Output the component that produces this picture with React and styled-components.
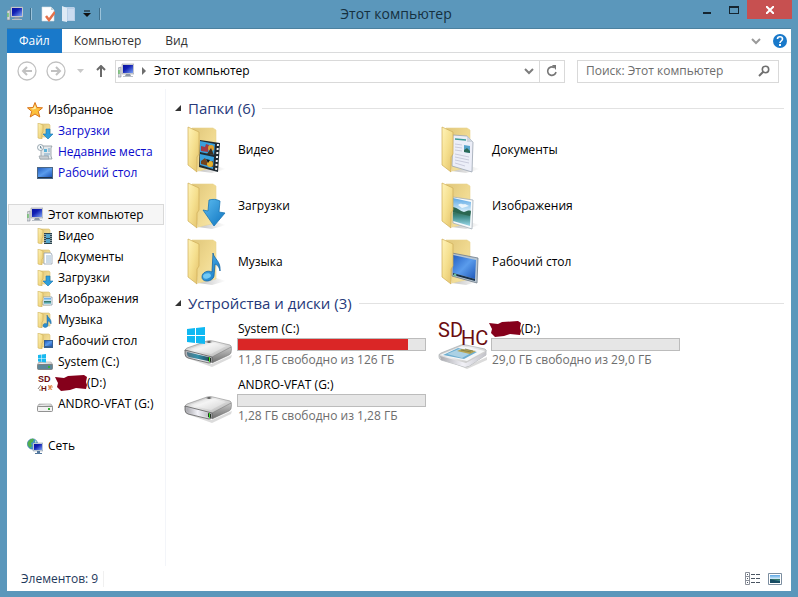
import styled, { createGlobalStyle } from 'styled-components';

const GlobalStyle = createGlobalStyle`
    * {
        box-sizing: border-box;
    }

    body {
        margin: 0;
        background: #5b97bb;
        color: #000;
        font-family: "Open Sans", "Noto Sans", sans-serif;
        font-size: 12px;
        line-height: 16px;
    }

    button, input {
        font: inherit;
        color: inherit;
        border: none;
        background: none;
        padding: 0;
        margin: 0;
    }

    a {
        color: inherit;
        text-decoration: none;
    }

    svg {
        display: block;
        flex: none;
    }
`;

const Window = styled.div`
    display: flex;
    flex-direction: column;
    min-height: 100vh;
    padding: 0 7px 6px;
`;

const TitleBar = styled.header`
    display: grid;
    grid-template-columns: 1fr auto 1fr;
    height: 28px;
    margin: 0 -1px 0 -7px;
`;

const QuickAccess = styled.div`
    display: flex;
    align-items: center;
    gap: 6px;
    padding-left: 7px;
`;

const QuickButton = styled.button`
    display: flex;
`;

const Divider = styled.span`
    width: 2px;
    height: 12px;
    margin: 0 3px 0 1px;
    border-left: 1px solid #3f6f8c;
    border-right: 1px solid #9cc3da;
`;

const Title = styled.h1`
    margin: 0;
    font-size: 14px;
    font-weight: 400;
    line-height: 27px;
    color: #15303f;
`;

const WindowButtons = styled.div`
    display: flex;
    justify-content: flex-end;
    align-items: flex-start;
`;

const WindowButton = styled.button`
    display: flex;
    align-items: center;
    justify-content: center;
    width: ${(p) => (p.$close ? '45px' : '27px')};
    height: 19px;
    background: ${(p) => (p.$close ? '#c75050' : 'transparent')};
`;

const Frame = styled.div`
    display: flex;
    flex: 1;
    flex-direction: column;
    background: #fff;
    border-top: 1px solid #4c819f;
`;

const Ribbon = styled.nav`
    display: flex;
    align-items: center;
    height: 24px;
    padding-right: 4px;
    border-bottom: 1px solid #dadbdc;
`;

const Tab = styled.button`
    height: 24px;
    padding: 0 12px;
    color: ${(p) => (p.$active ? '#fff' : '#333')};
    background: ${(p) => (p.$active ? '#1979ca' : 'transparent')};
`;

const RibbonTools = styled.div`
    display: flex;
    align-items: center;
    gap: 12px;
    margin-left: auto;
`;

const NavBar = styled.div`
    display: flex;
    align-items: center;
    height: 36px;
    padding: 0 12px 0 10px;
`;

const NavButtons = styled.div`
    display: flex;
    align-items: center;
    gap: 9px;
    margin-right: 9px;
`;

const AddressBar = styled.div`
    display: flex;
    flex: 1;
    align-items: center;
    height: 23px;
    margin-right: 12px;
    padding-left: 2px;
    border: 1px solid #d9d9d9;
`;

const Crumb = styled.button`
    display: flex;
    align-items: center;
    gap: 7px;
`;

const AddressButton = styled.button`
    display: flex;
    align-items: center;
    justify-content: center;
    width: ${(p) => (p.$wide ? '25px' : '20px')};
    height: 21px;
    margin-left: ${(p) => (p.$wide ? '0' : 'auto')};
    border-left: ${(p) => (p.$wide ? '1px solid #d9d9d9' : 'none')};
`;

const Search = styled.label`
    display: flex;
    flex: 0 0 202px;
    align-items: center;
    height: 23px;
    padding: 0 8px;
    border: 1px solid #d9d9d9;
`;

const SearchInput = styled.input`
    flex: 1;
    min-width: 0;
    outline: none;

    &::placeholder {
        color: #6d6d6d;
        opacity: 1;
    }
`;

const Body = styled.div`
    display: flex;
    flex: 1;
`;

const Sidebar = styled.nav`
    flex: 0 0 159px;
    padding: 10px 1px 0;
    border-right: 1px solid #f3f5f9;
`;

const SideGroup = styled.div`
    margin-bottom: 21px;
`;

const SideItem = styled.a`
    display: flex;
    align-items: center;
    gap: 5px;
    height: 21px;
    padding-left: ${(p) => (p.$nested ? '28px' : '18px')};
    white-space: nowrap;
    color: ${(p) => (p.$link ? '#0a0acc' : '#000')};
    border: 1px solid ${(p) => (p.$selected ? '#d9d9d9' : 'transparent')};
    background: ${(p) => (p.$selected ? '#f6f6f6' : 'transparent')};
`;

const Content = styled.main`
    flex: 1;
    min-width: 0;
    padding: 6px 7px 0 9px;
`;

const GroupHeader = styled.h2`
    display: flex;
    align-items: center;
    gap: 7px;
    height: 27px;
    margin: 0;
    font-size: 15px;
    font-weight: 400;
    color: #26397a;

    &::after {
        content: '';
        flex: 1;
        height: 1px;
        background: #e2e2e2;
    }
`;

const GroupToggle = styled.button`
    display: flex;
    align-items: center;
    gap: 7px;
    padding-bottom: 2px;
`;

const Tiles = styled.div`
    display: grid;
    grid-template-columns: repeat(auto-fill, 254px);
    padding-left: 9px;
`;

const Tile = styled.a`
    display: flex;
    align-items: center;
    gap: 6px;
    height: 56px;
`;

const DriveInfo = styled.div`
    width: 188px;
    padding-bottom: 1px;
`;

const DriveName = styled.div`
    display: flex;
    align-items: center;
    height: 16px;
    margin-left: ${(p) => (p.$hidden ? '-3px' : '0')};
`;

const Meter = styled.div`
    height: 13px;
    margin: 1px 0 1px -1px;
    border: 1px solid #bcbcbc;
    background: #e6e6e6;
`;

const MeterFill = styled.div`
    height: 100%;
    background: #da2626;
`;

const FreeSpace = styled.div`
    color: #6d6d6d;
`;

const StatusBar = styled.footer`
    display: flex;
    align-items: center;
    height: 25px;
    padding: 0 9px 0 14px;
    color: #1e395b;
`;

const ItemCount = styled.span`
    padding-right: 5px;
    border-right: 1px solid #f0f0f0;
`;

const ViewButtons = styled.div`
    display: flex;
    gap: 8px;
    margin-left: auto;
`;

// gradients shared by all icons
const Gradients = () => (
    <svg width="0" height="0" aria-hidden="true">
        <defs>
            <linearGradient id="flap" x1="0" y1="0" x2="1" y2="1">
                <stop offset="0" stopColor="#fff3b8" />
                <stop offset=".5" stopColor="#f5df8e" />
                <stop offset="1" stopColor="#e2c069" />
            </linearGradient>
            <linearGradient id="back" x1="0" y1="0" x2="1" y2="1">
                <stop offset="0" stopColor="#dfc67a" />
                <stop offset=".5" stopColor="#efd88e" />
                <stop offset="1" stopColor="#f8e8ac" />
            </linearGradient>
            <linearGradient id="blue" x1="0" y1="0" x2="1" y2="1">
                <stop offset="0" stopColor="#5cbcf0" />
                <stop offset="1" stopColor="#0f74c0" />
            </linearGradient>
            <linearGradient id="screen" x1="0" y1="0" x2="1" y2="1">
                <stop offset="0" stopColor="#245fc2" />
                <stop offset=".5" stopColor="#5a9cec" />
                <stop offset="1" stopColor="#1d56b8" />
            </linearGradient>
            <linearGradient id="monitor" x1="0" y1="0" x2="1" y2="1">
                <stop offset="0" stopColor="#0712a0" />
                <stop offset=".4" stopColor="#1220b4" />
                <stop offset="1" stopColor="#7ea4f4" />
            </linearGradient>
            <linearGradient id="metal" x1="0" y1="0" x2="1" y2="1">
                <stop offset="0" stopColor="#9b9b9b" />
                <stop offset=".4" stopColor="#efefef" />
                <stop offset="1" stopColor="#a5a5a5" />
            </linearGradient>
            <linearGradient id="metalSide" x1="0" y1="0" x2="0" y2="1">
                <stop offset="0" stopColor="#c8c8c8" />
                <stop offset="1" stopColor="#6c6c6c" />
            </linearGradient>
            <linearGradient id="teal" x1="0" y1="0" x2="1" y2="0">
                <stop offset="0" stopColor="#537382" />
                <stop offset=".5" stopColor="#3590aa" />
                <stop offset="1" stopColor="#245668" />
            </linearGradient>
            <linearGradient id="front" x1="0" y1="0" x2="1" y2="0">
                <stop offset="0" stopColor="#a9a9ae" />
                <stop offset=".5" stopColor="#f1f1f7" />
                <stop offset="1" stopColor="#c2c2c8" />
            </linearGradient>
            <linearGradient id="photo" x1="0" y1="0" x2="0" y2="1">
                <stop offset="0" stopColor="#5ba6e4" />
                <stop offset=".5" stopColor="#d9effa" />
                <stop offset=".52" stopColor="#35705a" />
                <stop offset=".68" stopColor="#438f8c" />
                <stop offset="1" stopColor="#9cd8ea" />
            </linearGradient>
            <linearGradient id="shade" x1="0" y1="0" x2="1" y2="0">
                <stop offset="0" stopColor="#999" stopOpacity=".6" />
                <stop offset="1" stopColor="#999" stopOpacity="0" />
            </linearGradient>
        </defs>
    </svg>
);

const overlays = {
    video: (
        <g>
            <path d="M16 14l20 3-2 29-19-5z" fill="#1f2a31" />
            <path d="M16 15l15 3-1 11-14-3zM16 28l14 3-1 12-13-4z" fill="#3aa0dc" />
            <path d="M17 20l4 1 1-3 3 1-1 7-7-1z" fill="#a33a44" />
            <circle cx="27" cy="22" r="3" fill="#e0a02b" />
            <path d="M23 28l4-6 3 7z" fill="#40301f" />
            <path d="M17 35l4-3 3 5 5-2v6l-12-3z" fill="#73431c" />
            <circle cx="26" cy="38" r="3" fill="#e6b32e" />
            <path d="M22 33l4 1-2 3z" fill="#161616" />
            <path d="M34 18l-2 27" stroke="#f2f2f2" strokeWidth="2" strokeDasharray="2 2" />
        </g>
    ),
    downloads: (
        <path d="M25 18c4-1 7-1 11 1l-1 11 6 1-11 13-11-16 5 1z" fill="url(#blue)" stroke="#1a76b4" strokeWidth=".8" />
    ),
    music: (
        <g fill="url(#blue)" stroke="#1767a6" strokeWidth=".8">
            <path d="M29 15c1 6 8 8 7 18-1-5-3-6-5-7l-1 12c-1 6-12 7-12 1 0-5 6-7 10-5z" />
            <ellipse cx="23" cy="38" rx="4" ry="2.5" fill="#73caf5" stroke="none" transform="rotate(-15 23 38)" />
        </g>
    ),
    documents: (
        <g>
            <path d="M15 9l14 1 6 6-1 30-20-6z" fill="#eceef8" stroke="#9ba5b1" strokeWidth=".8" />
            <path d="M29 10v6h6z" fill="#cfd6df" />
            <path d="M17 13l11 1" stroke="#3b9b96" strokeWidth="1.5" />
            <path d="M26 19l6 1v7l-6-1z" fill="#58a4cc" />
            <path d="M26 24l3-2 3 3v2l-6-1z" fill="#2d6a58" />
            <path d="M17 18l7 1M17 21l7 1M17 24l7 1M17 28l14 3M17 31l14 3M17 34l14 3M17 37l10 3" stroke="#c0c2d4" strokeWidth=".8" />
        </g>
    ),
    images: (
        <g>
            <path d="M15 15l20 3-1 29-19-6z" fill="#f7fafc" stroke="#a4aeb8" strokeWidth=".8" />
            <path d="M15 16l18 4-1 24-17-5z" fill="url(#photo)" />
            <path d="M15 25c5 1 7 4 11 5 3-1 5-2 7-1l-1 5-17-4z" fill="#2a6651" />
            <path d="M20 23c3-3 4 0 7-1l4 2-7 2z" fill="#fff" opacity=".8" />
        </g>
    ),
    desktop: (
        <g>
            <path d="M14 15l26 5-1 25-25-7z" fill="#b8c6d2" stroke="#6e7b88" strokeWidth=".8" />
            <path d="M15 17l23 5-1 19-22-6z" fill="url(#screen)" />
            <path d="M15 35l22 6v2l-22-6z" fill="#173049" />
            <circle cx="17" cy="37" r="1.5" fill="#6fbd9d" />
        </g>
    ),
};

const LargeFolder = ({ kind }) => (
    <svg width="48" height="48" viewBox="0 0 48 48" aria-hidden="true">
        <path d="M14 45l18-5 10 3-14 4z" fill="url(#shade)" />
        <path d="M8 2l21 0 3 2v37l-18 4z" fill="url(#back)" stroke="#ead58d" strokeWidth=".6" />
        {overlays[kind]}
        <path d="M4 1l11 5v22l-2 3v15l-9-7z" fill="url(#flap)" stroke="#cfae57" strokeWidth=".7" />
    </svg>
);

const smallOverlays = {
    video: (
        <g>
            <path d="M7 5h8v11H7z" fill="#29444f" />
            <path d="M9 6h4v4H9zM9 11h4v4H9z" fill="#55a6cc" />
            <path d="M8 6v10M14 6v10" stroke="#fff" strokeDasharray="1 1" />
        </g>
    ),
    downloads: <path d="M9 6h4v5h3l-5 5-5-5h3z" fill="#2e9fdc" stroke="#1873ae" strokeWidth=".6" />,
    documents: (
        <g>
            <path d="M7 4h7l1 2v9H7z" fill="#fff" stroke="#8fa0b0" strokeWidth=".8" />
            <path d="M9 7h5M9 9h5M9 11h5M9 13h5" stroke="#7ba3c4" strokeWidth=".8" />
        </g>
    ),
    images: (
        <g>
            <path d="M6 6h9v8H6z" fill="#fff" stroke="#8799a8" strokeWidth=".8" />
            <path d="M7 7h7v6H7z" fill="url(#photo)" />
        </g>
    ),
    music: <path d="M10 3c1 3 5 4 4 9-1-2-2-3-3-3v4c0 3-5 3-5 1 0-3 3-3 4-2z" fill="#2c8fcf" stroke="#1c6599" strokeWidth=".5" />,
    desktop: (
        <g>
            <path d="M7 7h9v8H7z" fill="#345f92" />
            <path d="M8 8h7v5H8z" fill="url(#screen)" />
        </g>
    ),
};

const SmallFolder = ({ kind }) => (
    <svg width="16" height="16" viewBox="0 0 16 16" aria-hidden="true">
        <path d="M3 1h9l1 1v12H3z" fill="url(#back)" stroke="#d9bf72" strokeWidth=".6" />
        {smallOverlays[kind]}
        <path d="M1 0l5 2v7l-1 1v6l-4-1z" fill="url(#flap)" stroke="#cfae57" strokeWidth=".6" />
    </svg>
);

const ComputerIcon = () => (
    <svg width="16" height="16" viewBox="0 0 16 16" aria-hidden="true">
        <path d="M0 5l3-1v10H0z" fill="#d5d9dc" stroke="#848c94" strokeWidth=".6" />
        <path d="M1 7v4" stroke="#45b73c" />
        <path d="M4 1h12v10H4z" fill="#d6d8dc" stroke="#9ba0a8" strokeWidth=".6" />
        <path d="M5 2h10v8H5z" fill="url(#monitor)" />
        <path d="M8 11h4l1 2H7z" fill="#8d97a5" />
        <path d="M5 13h10v1H5z" fill="#b9bfc6" />
    </svg>
);

const StarIcon = () => (
    <svg width="16" height="16" viewBox="0 0 16 16" aria-hidden="true">
        <path d="M8 .5l2 5 5.5.3-4.2 3.6 1.5 5.6L8 12l-4.8 3 1.5-5.6L.5 5.8 6 5.5z" fill="#fcc03c" stroke="#d9741c" />
        <path d="M8 3l1.2 3.5L6 7.500l-2-1 2.500-.3z" fill="#fff0b0" />
    </svg>
);

const RecentIcon = () => (
    <svg width="16" height="16" viewBox="0 0 16 16" aria-hidden="true">
        <path d="M4 2h11l-1 2v8l1 3H3l1-3z" fill="#e3e8eb" stroke="#8d979e" strokeWidth=".8" />
        <path d="M7 5h3v3H7z" fill="#5cb2d8" />
        <path d="M11 5h2M11 7h2M7 10h6M7 12h5" stroke="#5f94ba" strokeWidth=".8" />
        <path d="M2 12h9l1 3H3z" fill="#c9ced2" stroke="#8d979e" strokeWidth=".6" />
        <circle cx="3.5" cy="3.5" r="3" fill="#f3f8fa" stroke="#85949e" strokeWidth=".8" />
        <path d="M3.5 2v2H5" fill="none" stroke="#4b6e86" strokeWidth=".8" />
    </svg>
);

const DesktopIcon = () => (
    <svg width="16" height="16" viewBox="0 0 16 16" aria-hidden="true">
        <path d="M0 2h16v12H0z" fill="#4c6784" />
        <path d="M1 3h14v9H1z" fill="url(#screen)" />
        <path d="M1 12h14v1H1z" fill="#20334a" />
    </svg>
);

const NetworkIcon = () => (
    <svg width="16" height="16" viewBox="0 0 16 16" aria-hidden="true">
        <circle cx="5.5" cy="6" r="5.2" fill="#3e95ce" stroke="#3a719c" strokeWidth=".5" />
        <path d="M1 4c2-3 4-4 6-3L6 4 4 5l1 3-2 2C1 8 0 6 1 4z" fill="#53b04c" />
        <path d="M8 2l2 2-2 1z" fill="#c2e8c2" />
        <path d="M6 5h10v8H6z" fill="#cfdae4" stroke="#7f8fa1" strokeWidth=".5" />
        <path d="M7 6h8v6H7z" fill="url(#monitor)" />
        <path d="M10 13h3v2h-3zM8 15h7v1H8z" fill="#54789d" />
    </svg>
);

const SmallDrive = ({ system }) => (
    <svg width="16" height="16" viewBox="0 0 16 16" aria-hidden="true">
        <path d="M2 8h12l2 3H0z" fill="url(#metal)" stroke="#8d8d8d" strokeWidth=".5" />
        <rect x=".5" y="10.5" width="15" height="5" rx="1" fill={system ? '#5e8799' : '#f2f2f2'} stroke="#777" strokeWidth=".8" />
        <path d="M11 12h2v2h-2z" fill="#35b135" />
        {system && <path d="M1 1l3.5-.5V4H1zM5 .5L9 0v4H5zM1 4.500h3.500V8L1 7.500zM5 4.500h4v4L5 8z" fill="#19b9f0" />}
    </svg>
);

const SmallCard = () => (
    <svg width="16" height="16" viewBox="0 0 16 16" overflow="visible" aria-hidden="true">
        <text x="1" y="7" fontFamily="Liberation Sans" fontSize="9" fontWeight="700" fill="#6b0d10">SD</text>
        <text x="4" y="16" fontFamily="Liberation Sans" fontSize="8" fontWeight="700" fill="#6b0d10">H</text>
        <path d="M1 14l3-4M2 15h2" stroke="#8f8176" />
        <path d="M11 12h5M13 10v5M11 10l4 5M15 10l-4 5" stroke="#d9742c" strokeWidth=".8" />
    </svg>
);

const LargeDrive = ({ system }) => (
    <svg width="48" height="48" viewBox="0 0 48 48" aria-hidden="true">
        <path d="M3 37l25 6 20-9-1 3-19 9z" fill="#999" opacity=".35" />
        <path d="M1 30q0-2 2-3l20-7q3-1 6 0l17 4q2 1 1 3L30 36q-2 1-4 0L3 31z" fill="url(#metal)" stroke="#8a8a8a" strokeWidth=".6" />
        <path d="M6 28l19-7 17 4-15 8z" fill="#fff" opacity=".35" />
        <path d="M28 36l19-10q1 1 0 6-1 2-4 3l-15 7z" fill="url(#metalSide)" stroke="#757575" strokeWidth=".5" />
        <path d="M1 29l27 7v4q0 2-3 2L4 37q-3-1-3-4z" fill="url(#front)" stroke="#5d5d5d" strokeWidth=".8" />
        <path d="M3 31l21 5v4L5 36q-2-1-2-3z" fill={system ? 'url(#teal)' : 'url(#front)'} />
        <path d="M24 36l3 1v4l-3-1z" fill="#253025" />
        <path d="M25 36h1v5h-1z" fill="#3be02b" />
        <path d="M22 21l3-1 3 1-3 1z" fill="#555" />
        {system && (
            <path d="M3 8l8-1v7H3zM12 7l9-1v8h-9zM3 15h8v7l-8-1zM12 15h9v8l-9-1z" fill="#0fb8f2" />
        )}
    </svg>
);

const LargeCard = () => (
    <svg width="48" height="48" viewBox="0 0 48 48" overflow="visible" aria-hidden="true">
        <path d="M3 37l26 8 20-9v3l-20 9z" fill="#888" opacity=".3" />
        <path d="M1 34q0-1 2-2l20-8q2-1 5 0l19 4q2 1 1 3v3L31 45q-2 1-4 1L3 39q-2-1-2-3z" fill="url(#metal)" stroke="#a0a6aa" strokeWidth=".6" />
        <path d="M2 34l22-9 23 5-18 10z" fill="#f5f7f8" />
        <path d="M5 34l15-7 19 4-13 7z" fill="#6eaed0" />
        <path d="M9 33l12-5 14 3-11 6z" fill="#abd1e4" />
        <path d="M19 30l5-2 14 2-6 3z" fill="#b6a452" />
        <path d="M23 29l10 2M27 28l8 2" stroke="#7c7b45" strokeWidth=".8" />
        <path d="M2 35l26 7 20-11v3L31 45l-4 1-24-7z" fill="url(#front)" />
        <text x="0" y="16" fontFamily="Roboto" fontSize="20" fill="#6b0d10">SD</text>
        <text x="23" y="24" fontFamily="Roboto" fontSize="20" fill="#6b0d10">HC</text>
    </svg>
);

const Scribble = () => (
    <svg width="32" height="16" viewBox="0 0 32 16" aria-hidden="true">
        <path d="M0 2l9 1 4-2 16-1 3 2-1 5 1 3-1 4-10-1-6 2-9 1-4-4 1-4z" fill="#85001b" />
    </svg>
);

const ArrowCircle = ({ right }) => (
    <svg width="20" height="20" viewBox="0 0 20 20" fill="none" stroke="#c1c1c1" aria-hidden="true">
        <circle cx="10" cy="10" r="9" strokeWidth="1.3" />
        <path d={right ? 'M5 10h9M10 6l4 4-4 4' : 'M15 10H6M10 6l-4 4 4 4'} strokeWidth="2" />
    </svg>
);

const Chevron = ({ color = '#7d7d7d' }) => (
    <svg width="10" height="8" viewBox="0 0 10 8" fill="none" stroke={color} strokeWidth="2" aria-hidden="true">
        <path d="M1 2l4 4 4-4" />
    </svg>
);

const favorites = [
    { name: 'Загрузки', icon: <SmallFolder kind="downloads" /> },
    { name: 'Недавние места', icon: <RecentIcon /> },
    { name: 'Рабочий стол', icon: <DesktopIcon /> },
];

const computer = [
    { name: 'Видео', icon: <SmallFolder kind="video" /> },
    { name: 'Документы', icon: <SmallFolder kind="documents" /> },
    { name: 'Загрузки', icon: <SmallFolder kind="downloads" /> },
    { name: 'Изображения', icon: <SmallFolder kind="images" /> },
    { name: 'Музыка', icon: <SmallFolder kind="music" /> },
    { name: 'Рабочий стол', icon: <SmallFolder kind="desktop" /> },
    { name: 'System (C:)', icon: <SmallDrive system /> },
    { name: '(D:)', icon: <SmallCard />, hidden: true },
    { name: 'ANDRO-VFAT (G:)', icon: <SmallDrive /> },
];

const folders = [
    { name: 'Видео', kind: 'video' },
    { name: 'Документы', kind: 'documents' },
    { name: 'Загрузки', kind: 'downloads' },
    { name: 'Изображения', kind: 'images' },
    { name: 'Музыка', kind: 'music' },
    { name: 'Рабочий стол', kind: 'desktop' },
];

const drives = [
    { name: 'System (C:)', free: '11,8 ГБ свободно из 126 ГБ', used: 91, icon: <LargeDrive system /> },
    { name: '(D:)', free: '29,0 ГБ свободно из 29,0 ГБ', used: 0, icon: <LargeCard />, hidden: true },
    { name: 'ANDRO-VFAT (G:)', free: '1,28 ГБ свободно из 1,28 ГБ', used: 0, icon: <LargeDrive /> },
];

const Group = ({ title, children }) => (
    <section>
        <GroupHeader>
            <GroupToggle>
                <svg width="6" height="6" viewBox="0 0 6 6" aria-hidden="true">
                    <path d="M6 0v6H0z" fill="#333" />
                </svg>
                {title}
            </GroupToggle>
        </GroupHeader>
        <Tiles>{children}</Tiles>
    </section>
);

export default function App() {
    return (
        <Window>
            <GlobalStyle />
            <TitleBar>
                <QuickAccess>
                    <ComputerIcon />
                    <Divider />
                    <QuickButton aria-label="Свойства">
                        <svg width="14" height="16" viewBox="0 0 14 16">
                            <path d="M1 1h9l3 3v11H1z" fill="#fff" stroke="#d3dde4" strokeWidth=".6" />
                            <path d="M10 1v3h3z" fill="#c1ced7" />
                            <path d="M5 10l3 4 6-8" fill="none" stroke="#e4714a" strokeWidth="2.5" />
                        </svg>
                    </QuickButton>
                    <QuickButton aria-label="Новая папка">
                        <svg width="15" height="16" viewBox="0 0 15 16">
                            <path d="M3 1h10l1 1v13H3z" fill="#b9d0e8" />
                            <path d="M1 0l5 2v14l-5-1z" fill="#dfeaf5" />
                            <path d="M7 3h6v11H7z" fill="#cbdcf0" />
                        </svg>
                    </QuickButton>
                    <QuickButton aria-label="Настройка панели">
                        <svg width="10" height="8" viewBox="0 0 10 8">
                            <path d="M2 1h6" stroke="#111" />
                            <path d="M1 3h8L5 7z" fill="#111" />
                        </svg>
                    </QuickButton>
                    <Divider />
                </QuickAccess>
                <Title>Этот компьютер</Title>
                <WindowButtons>
                    <WindowButton aria-label="Свернуть">
                        <svg width="10" height="10" viewBox="0 0 10 10">
                            <path d="M1 7h8v2H1z" fill="#152530" />
                        </svg>
                    </WindowButton>
                    <WindowButton aria-label="Развернуть">
                        <svg width="10" height="8" viewBox="0 0 10 8">
                            <path d="M0 0h10v8H0zM1 2v5h8V2z" fill="#152530" fillRule="evenodd" />
                        </svg>
                    </WindowButton>
                    <WindowButton $close aria-label="Закрыть">
                        <svg width="8" height="8" viewBox="0 0 8 8">
                            <path d="M0 0l8 8M8 0L0 8" stroke="#fff" strokeWidth="2" />
                        </svg>
                    </WindowButton>
                </WindowButtons>
            </TitleBar>
            <Frame>
                <Ribbon>
                    <Tab $active>Файл</Tab>
                    <Tab>Компьютер</Tab>
                    <Tab>Вид</Tab>
                    <RibbonTools>
                        <button aria-label="Развернуть ленту"><Chevron color="#9a9a9a" /></button>
                        <button aria-label="Справка">
                            <svg width="14" height="14" viewBox="0 0 14 14">
                                <circle cx="7" cy="7" r="7" fill="#1979ca" />
                                <path d="M4.5 5c0-3 5-3 5 0 0 2-2.5 2-2.5 4" fill="none" stroke="#fff" strokeWidth="1.6" />
                                <path d="M6 10h2v2H6z" fill="#fff" />
                            </svg>
                        </button>
                    </RibbonTools>
                </Ribbon>
                <NavBar>
                    <NavButtons>
                        <button aria-label="Назад"><ArrowCircle /></button>
                        <button aria-label="Вперед"><ArrowCircle right /></button>
                        <button aria-label="Последние расположения">
                            <svg width="12" height="5" viewBox="0 0 12 5">
                                <path d="M2 0h7L5.5 4z" fill="#c9c9c9" />
                            </svg>
                        </button>
                        <button aria-label="Вверх">
                            <svg width="10" height="12" viewBox="0 0 10 12" fill="none" stroke="#6a6a6a" strokeWidth="2">
                                <path d="M5 12V2M1 5l4-4 4 4" />
                            </svg>
                        </button>
                    </NavButtons>
                    <AddressBar>
                        <Crumb>
                            <ComputerIcon />
                            <svg width="6" height="8" viewBox="0 0 6 8">
                                <path d="M1 0l4 4-4 4z" fill="#6d6d6d" />
                            </svg>
                            Этот компьютер
                        </Crumb>
                        <AddressButton aria-label="Предыдущие расположения"><Chevron /></AddressButton>
                        <AddressButton $wide aria-label="Обновить">
                            <svg width="12" height="12" viewBox="0 0 12 12">
                                <path d="M8 2.500A4.200 4.200 0 1 0 10 7" fill="none" stroke="#777" strokeWidth="1.6" />
                                <path d="M6 0h4v5z" fill="#777" />
                            </svg>
                        </AddressButton>
                    </AddressBar>
                    <Search>
                        <SearchInput type="text" placeholder="Поиск: Этот компьютер" aria-label="Поиск" />
                        <svg width="12" height="12" viewBox="0 0 12 12" fill="none" stroke="#6f6f6f">
                            <circle cx="7.5" cy="4.5" r="3.2" strokeWidth="1.6" />
                            <path d="M5 7l-4 4" strokeWidth="2" />
                        </svg>
                    </Search>
                </NavBar>
                <Gradients />
                <Body>
                    <Sidebar>
                        <SideGroup>
                            <SideItem href="#favorites"><StarIcon />Избранное</SideItem>
                            {favorites.map((item) => (
                                <SideItem key={item.name} href="#folder" $nested $link>
                                    {item.icon}
                                    {item.name}
                                </SideItem>
                            ))}
                        </SideGroup>
                        <SideGroup>
                            <SideItem href="#computer" $selected><ComputerIcon />Этот компьютер</SideItem>
                            {computer.map((item) => (
                                <SideItem key={item.name} href="#folder" $nested>
                                    {item.icon}
                                    <DriveName $hidden={item.hidden}>
                                        {item.hidden && <Scribble />}
                                        {item.name}
                                    </DriveName>
                                </SideItem>
                            ))}
                        </SideGroup>
                        <SideItem href="#network"><NetworkIcon />Сеть</SideItem>
                    </Sidebar>
                    <Content>
                        <Group title="Папки (6)">
                            {folders.map((folder) => (
                                <Tile key={folder.kind} href="#folder">
                                    <LargeFolder kind={folder.kind} />
                                    {folder.name}
                                </Tile>
                            ))}
                        </Group>
                        <Group title="Устройства и диски (3)">
                            {drives.map((drive) => (
                                <Tile key={drive.name} href="#drive">
                                    {drive.icon}
                                    <DriveInfo>
                                        <DriveName $hidden={drive.hidden}>
                                            {drive.hidden && <Scribble />}
                                            {drive.name}
                                        </DriveName>
                                        <Meter>
                                            <MeterFill style={{ width: `${drive.used}%` }} />
                                        </Meter>
                                        <FreeSpace>{drive.free}</FreeSpace>
                                    </DriveInfo>
                                </Tile>
                            ))}
                        </Group>
                    </Content>
                </Body>
                <StatusBar>
                    <ItemCount>Элементов: 9</ItemCount>
                    <ViewButtons>
                        <button aria-label="Таблица">
                            <svg width="15" height="13" viewBox="0 0 15 13" fill="none" stroke="#8a8f99">
                                <path d="M.5.5h4v12h-4zM.5 4.500h4M.5 8.500h4" />
                                <path d="M2 2.500h1M2 6.500h1M2 10.500h1M6 2.500h4M11 2.500h4M6 6.500h4M11 6.500h4M6 10.500h4M11 10.500h4" stroke="#4a5562" />
                            </svg>
                        </button>
                        <button aria-label="Крупные значки">
                            <svg width="14" height="12" viewBox="0 0 14 12">
                                <path d="M.5.5h13v11H.5z" fill="#fff" stroke="#7c8ea0" />
                                <path d="M2 2h10v8H2z" fill="url(#photo)" />
                                <path d="M2 6l4 1 6 1v2H2z" fill="#174c63" />
                            </svg>
                        </button>
                    </ViewButtons>
                </StatusBar>
            </Frame>
        </Window>
    );
}
